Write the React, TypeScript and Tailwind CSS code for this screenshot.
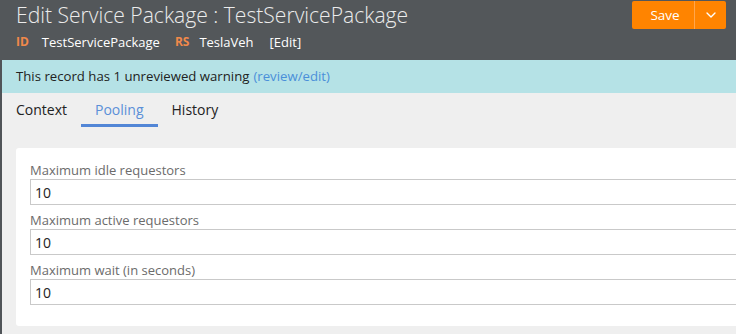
import { FiChevronDown } from "react-icons/fi";

const fields = [
  ["Maximum idle requestors", "10"],
  ["Maximum active requestors", "10"],
  ["Maximum wait (in seconds)", "10"],
] as const;

const tabs = ["Context", "Pooling", "History"];

export default function App() {
  return (
    <div className="h-[334px] w-[736px] overflow-hidden bg-[#efefef] font-['Open_Sans',sans-serif]">
      <header className="flex h-[60px] items-start justify-between bg-[#53575a] pl-4 pr-[10px]">
        <div>
          <h1 className="mt-[1px] text-[21.1px] font-light leading-[28px] text-[#ececec]">
            Edit Service Package : TestServicePackage
          </h1>
          <div className="mt-[4px] flex items-center text-[13px] leading-[18px] text-white">
            <span className="mr-[13px] text-[12px] font-bold text-[#f0894a]">ID</span>
            <span className="mr-[15px]">TestServicePackage</span>
            <span className="mr-[10px] text-[12px] font-bold text-[#f0894a]">RS</span>
            <span className="mr-[16px]">TeslaVeh</span>
            <span>[Edit]</span>
          </div>
        </div>
        <div className="mt-[1px] flex h-[28px] overflow-hidden rounded-[2px] bg-[#ff8400] text-white">
          <button type="button" className="w-[62px] pl-[4px] text-[13.5px]">
            Save
          </button>
          <span className="w-px bg-[#ffa64d]" />
          <button type="button" className="flex w-[31px] items-center justify-center">
            <FiChevronDown className="text-[16px]" />
          </button>
        </div>
      </header>

      <div className="flex h-[274px] border-l-2 border-[#505458]">
        <div className="flex-1">
          <div className="flex h-[33px] items-center bg-[#b5e2e6] pl-[14px] pt-[1px] text-[13.2px] text-[#222]">
            This record has 1 unreviewed warning
            <span className="ml-1 text-[#4a8fd9]">(review/edit)</span>
          </div>

          <nav className="flex h-[34px] items-stretch pl-[14px] pt-[1px] text-[14px]">
            {tabs.map((tab) => {
              const active = tab === "Pooling";
              return (
                <div
                  key={tab}
                  className={`flex items-center border-b-[3px] ${
                    tab === "Context" ? "pr-[14px]" : "px-[14px]"
                  } ${active ? "border-[#5286d6] text-[#5b8fd8]" : "border-transparent text-[#222]"}`}
                >
                  {tab}
                </div>
              );
            })}
          </nav>

          <section className="ml-[14px] mt-[21px] h-[178px] rounded-l-[3px] bg-white pl-[14px] pt-[13px]">
            {fields.map(([label, value]) => (
              <div key={label} className="mb-[6px]">
                <div className="text-[13px] leading-[18px] text-[#6b6b6b]">{label}</div>
                <div className="flex h-[26px] items-center border border-r-0 border-[#c9c9c9] pl-[4px] text-[14px] text-[#222]">
                  {value}
                </div>
              </div>
            ))}
          </section>
        </div>
      </div>
    </div>
  );
}
